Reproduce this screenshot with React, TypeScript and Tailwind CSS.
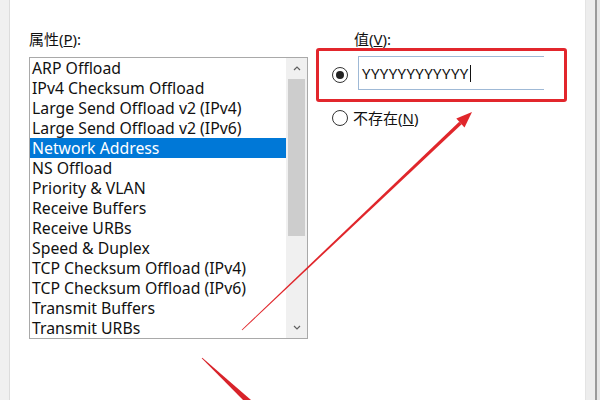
const items = [
  "ARP Offload",
  "IPv4 Checksum Offload",
  "Large Send Offload v2 (IPv4)",
  "Large Send Offload v2 (IPv6)",
  "Network Address",
  "NS Offload",
  "Priority & VLAN",
  "Receive Buffers",
  "Receive URBs",
  "Speed & Duplex",
  "TCP Checksum Offload (IPv4)",
  "TCP Checksum Offload (IPv6)",
  "Transmit Buffers",
  "Transmit URBs",
];

const font = { fontFamily: '"Noto Sans", "Noto Sans CJK SC", sans-serif' };

function Chevron({ up }: { up?: boolean }) {
  return (
    <svg width="8" height="5" viewBox="0 0 8 5" className="text-[#606060]">
      <path
        d={up ? "M1 4 L4 1 L7 4" : "M1 1 L4 4 L7 1"}
        fill="none"
        stroke="currentColor"
        strokeWidth="1.2"
      />
    </svg>
  );
}

function Radio({ checked }: { checked?: boolean }) {
  return (
    <span className="flex size-[16px] shrink-0 items-center justify-center rounded-full border border-[#333] bg-white">
      {checked ? <span className="size-[8px] rounded-full bg-[#222]" /> : null}
    </span>
  );
}

function Arrows() {
  return (
    <svg
      className="pointer-events-none absolute inset-0"
      width="600"
      height="400"
      viewBox="0 0 600 400"
    >
      {/* long arrow pointing at the value box */}
      <polygon
        points="242.3,330.3 241.7,329.7 459.2,121.7 461.6,124.3"
        fill="#e0262b"
      />
      <polygon points="472,112 464.5,127.6 456.3,118.6" fill="#e0262b" />
      {/* second arrow tail, heading off the bottom */}
      <polygon points="202.3,357.7 201.7,358.3 247,404 251,400" fill="#d8232a" />
    </svg>
  );
}

export default function App() {
  return (
    <div
      className="relative flex h-[400px] w-[600px] overflow-hidden bg-white text-[15px] text-[#111]"
      style={font}
    >
      <div className="w-[10px] shrink-0 border-r border-[#dcdcdc] bg-[#f0f0f0]" />

      <div className="flex flex-1 bg-white">
        {/* 属性 list */}
        <div className="ml-[19px] flex flex-col pt-[29px]">
          <div className="h-[20px] leading-[20px]">
            属性(<span className="underline">P</span>):
          </div>
          <div className="mt-[8px] flex h-[282px] w-[279px] border border-[#a9a9a9]">
            <div className="flex flex-1 flex-col text-[15.8px]">
              {items.map((item) => (
                <div
                  key={item}
                  className={
                    item === "Network Address"
                      ? "h-[20px] bg-[#0078d7] pl-[2px] leading-[20px] whitespace-nowrap text-white"
                      : "h-[20px] pl-[2px] leading-[20px] whitespace-nowrap"
                  }
                >
                  {item}
                </div>
              ))}
            </div>
            <div className="flex w-[21px] flex-col bg-[#f0f0f0]">
              <div className="flex h-[21px] items-center justify-center">
                <Chevron up />
              </div>
              <div className="mx-[2px] h-[157px] bg-[#cdcdcd]" />
              <div className="flex-1" />
              <div className="flex h-[21px] items-center justify-center">
                <Chevron />
              </div>
            </div>
          </div>
        </div>

        {/* 值 */}
        <div className="ml-[8px] flex flex-col pt-[30px]">
          <div className="ml-[38px] h-[18px] leading-[18px]">
            值(<span className="underline">V</span>):
          </div>
          <div className="flex h-[54px] w-[251px] items-start rounded-[3px] border-[3px] border-[#e2262c] pt-[5px]">
            <div className="ml-[13px] mt-[11px]">
              <Radio checked />
            </div>
            <div className="ml-[10px] flex h-[34px] w-[186px] items-center border border-r-0 border-[#9fb9d6] pl-[3px]">
              <span className="tracking-[0.4px]">YYYYYYYYYYYY</span>
              <span className="ml-[1px] h-[17px] w-px bg-[#111]" />
            </div>
          </div>
          <div className="ml-[16px] mt-[6px] flex h-[20px] items-center gap-[5px]">
            <Radio />
            <span className="leading-[20px]">
              不存在(<span className="underline">N</span>)
            </span>
          </div>
        </div>
      </div>

      <div className="w-[10px] shrink-0 border-l border-[#e4e4e4] bg-[#ededed]" />
      <div className="w-[2px] shrink-0 bg-[#9a9a9a]" />
      <div className="w-[3px] shrink-0 bg-[#e6e6e6]" />

      <Arrows />
    </div>
  );
}
